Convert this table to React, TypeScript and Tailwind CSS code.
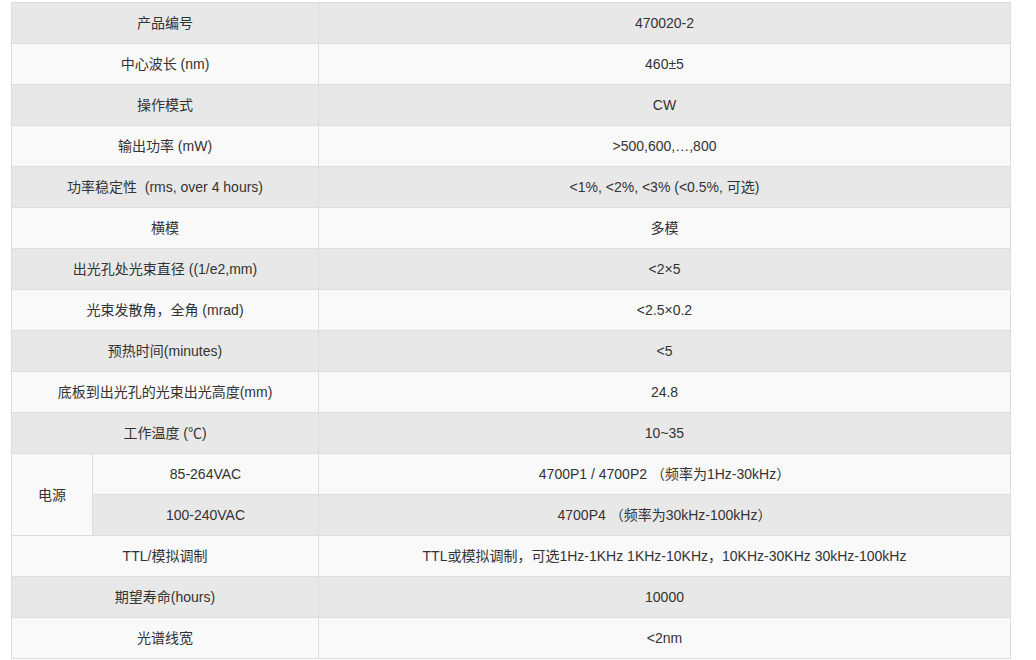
import React from 'react';

type Row = { label: string; value: string };

const topRows: Row[] = [
  { label: '产品编号', value: '470020-2' },
  { label: '中心波长 (nm)', value: '460±5' },
  { label: '操作模式', value: 'CW' },
  { label: '输出功率 (mW)', value: '>500,600,…,800' },
  { label: '功率稳定性  (rms, over 4 hours)', value: '<1%, <2%, <3% (<0.5%, 可选)' },
  { label: '横模', value: '多模' },
  { label: '出光孔处光束直径 ((1/e2,mm)', value: '<2×5' },
  { label: '光束发散角，全角 (mrad)', value: '<2.5×0.2' },
  { label: '预热时间(minutes)', value: '<5' },
  { label: '底板到出光孔的光束出光高度(mm)', value: '24.8' },
  { label: '工作温度 (℃)', value: '10~35' },
];

const bottomRows: Row[] = [
  { label: 'TTL/模拟调制', value: 'TTL或模拟调制，可选1Hz-1KHz 1KHz-10KHz，10KHz-30KHz 30kHz-100kHz' },
  { label: '期望寿命(hours)', value: '10000' },
  { label: '光谱线宽', value: '<2nm' },
];

const cell = 'border border-[#dddddd] text-center align-middle px-2 pt-px pb-0 whitespace-pre';
const gray = 'bg-[#e8e8e8]';
const light = 'bg-[#f9f9f9]';

export default function App() {
  return (
    <div
      className="min-h-screen bg-white pt-[2px] pl-[11px] text-[14px] text-[#333333]"
      style={{ fontFamily: '"Liberation Sans", Arial, "Noto Sans CJK SC", sans-serif' }}
    >
      <table className="table-fixed border-collapse w-[999px]">
        <colgroup>
          <col className="w-[81px]" />
          <col className="w-[226px]" />
          <col className="w-[692px]" />
        </colgroup>
        <tbody>
          {topRows.map((r, i) => (
            <tr key={r.label} className={`h-[41px] ${i % 2 === 0 ? gray : light}`}>
              <td colSpan={2} className={cell}>{r.label}</td>
              <td className={cell}>{r.value}</td>
            </tr>
          ))}
          <tr className={`h-[41px] ${light}`}>
            <td rowSpan={2} className={cell}>电源</td>
            <td className={cell}>85-264VAC</td>
            <td className={cell}>4700P1 / 4700P2 （频率为1Hz-30kHz）</td>
          </tr>
          <tr className={`h-[41px] ${gray}`}>
            <td className={cell}>100-240VAC</td>
            <td className={cell}>4700P4 （频率为30kHz-100kHz）</td>
          </tr>
          {bottomRows.map((r, i) => (
            <tr key={r.label} className={`h-[41px] ${i % 2 === 0 ? light : gray}`}>
              <td colSpan={2} className={cell}>{r.label}</td>
              <td className={cell}>{r.value}</td>
            </tr>
          ))}
        </tbody>
      </table>
    </div>
  );
}
